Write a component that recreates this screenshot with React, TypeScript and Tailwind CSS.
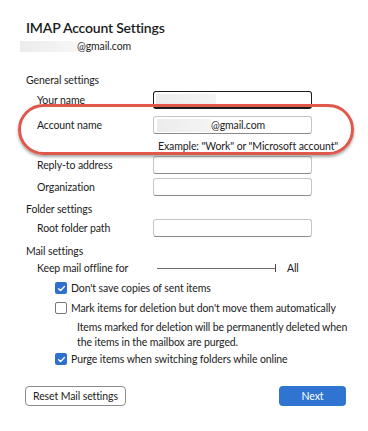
import React from "react";

const font = { fontFamily: 'Lato, "Noto Sans", sans-serif' };
const T = "text-[10.5px] leading-[14px] tracking-[-0.1px]";

function Input({ children, focused }: { children?: React.ReactNode; focused?: boolean }) {
  return (
    <div
      className={
        "h-[18px] w-[159px] shrink-0 rounded-[3px] border bg-white flex items-center overflow-hidden " +
        (focused ? "border-[#1b1b1b] border-b-[2px]" : "border-[#c5c5c5] border-b-[#8a8a8a]")
      }
    >
      {children}
    </div>
  );
}

function Row({ label, children, className }: { label: string; children?: React.ReactNode; className?: string }) {
  return (
    <div className={"flex items-center " + (className ?? "")}>
      <div className={"w-[127px] shrink-0 pl-[11px] text-[#1b1b1b] " + T}>{label}</div>
      {children}
    </div>
  );
}

function Check({ checked }: { checked?: boolean }) {
  return checked ? (
    <div className="w-[12px] h-[12px] shrink-0 rounded-[2px] bg-[#2f6fce] flex items-center justify-center">
      <svg width="9" height="9" viewBox="0 0 10 10" fill="none">
        <path d="M1.8 5.2 L4 7.3 L8.3 2.7" stroke="white" strokeWidth="1.5" strokeLinecap="round" strokeLinejoin="round" />
      </svg>
    </div>
  ) : (
    <div className="w-[12px] h-[12px] shrink-0 rounded-[2px] border border-[#7a7a7a] bg-white" />
  );
}

export default function App() {
  return (
    <div className="relative w-[368px] h-[431px] bg-white text-[#1b1b1b] overflow-hidden" style={font}>
      <div className="flex flex-col pl-[26px] pt-[18px]">
        <div className="h-[20px] text-[14px] leading-[20px] font-semibold tracking-[-0.2px]">IMAP Account Settings</div>
        <div className="mt-[1px] h-[14px] flex items-center -ml-[6px]">
          <div className="w-[57px] h-[11px] bg-gradient-to-r from-[#ececec] to-[#f6f6f6]" />
          <span className={T}>@gmail.com</span>
        </div>
        <div className={"mt-[20px] h-[14px] " + T}>General settings</div>
        <Row label="Your name" className="mt-[4px]">
          <Input focused>
            <div className="ml-[2px] w-[60px] h-[12px] bg-gradient-to-r from-[#ececec] to-[#f4f4f4]" />
          </Input>
        </Row>
        <Row label="Account name" className="mt-[7px]">
          <Input>
            <div className="ml-[3px] w-[54px] h-[13px] bg-gradient-to-r from-[#ececec] to-[#f4f4f4]" />
            <span className={T}>@gmail.com</span>
          </Input>
        </Row>
        <div className={"mt-[5px] h-[14px] pl-[132px] whitespace-nowrap " + T}>
          Example: "Work" or "Microsoft account"
        </div>
        <Row label="Reply-to address" className="mt-[3px]">
          <Input />
        </Row>
        <Row label="Organization" className="mt-[4px]">
          <Input />
        </Row>
        <div className={"mt-[6px] h-[14px] " + T}>Folder settings</div>
        <Row label="Root folder path" className="mt-[3px]">
          <Input />
        </Row>
        <div className={"mt-[7px] h-[14px] " + T}>Mail settings</div>
        <div className="mt-[3px] h-[14px] flex items-center">
          <div className={"w-[131px] shrink-0 pl-[11px] " + T}>Keep mail offline for</div>
          <div className="w-[118px] h-[1px] bg-[#6e6e6e]" />
          <div className="w-[1px] h-[8px] bg-[#4a4a4a]" />
          <span className={"ml-[11px] " + T}>All</span>
        </div>
        <div className="mt-[5px] h-[16px] flex items-center pl-[29px] gap-[4px]">
          <Check checked />
          <span className={T}>Don't save copies of sent items</span>
        </div>
        <div className="mt-[4px] h-[16px] flex items-center pl-[29px] gap-[4px]">
          <Check />
          <span className={"whitespace-nowrap " + T}>Mark items for deletion but don't move them automatically</span>
        </div>
        <div className="mt-[4px] pl-[51px] whitespace-nowrap text-[10.5px] leading-[15px] tracking-[-0.1px]">
          Items marked for deletion will be permanently deleted when
          <br />
          the items in the mailbox are purged.
        </div>
        <div className="mt-[1px] h-[16px] flex items-center pl-[29px] gap-[4px]">
          <Check checked />
          <span className={T}>Purge items when switching folders while online</span>
        </div>
        <div className="mt-[19px] flex items-center justify-between pr-[22px] -ml-[1px]">
          <button className={"h-[20px] px-[7px] rounded-[4px] border border-[#8c8c8c] bg-white " + T}>
            Reset Mail settings
          </button>
          <button className={"h-[20px] w-[67px] rounded-[4px] bg-[#2f74d0] text-white " + T}>
            Next
          </button>
        </div>
      </div>
      <div className="absolute left-[18px] top-[104px] w-[336px] h-[51px] rounded-full border-[3px] border-[#e0574b] shadow-[0_2px_3px_rgba(0,0,0,0.35)]" />
    </div>
  );
}
